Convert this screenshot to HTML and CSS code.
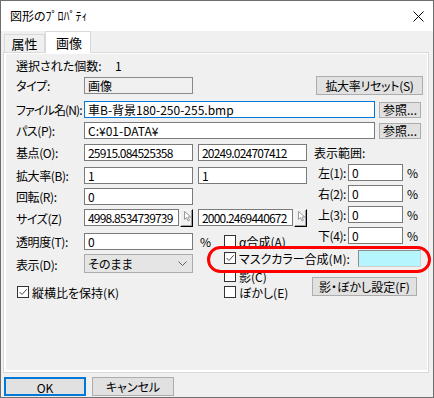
FILE: index.html
```html
<!DOCTYPE html>
<html lang="ja">
  <head>
    <meta charset="UTF-8" />
    <title>図形のﾌﾟﾛﾊﾟﾃｨ</title>
    <link rel="stylesheet" href="styles.css">
  </head>
  <body>
    <div class="dialog">
      <div class="titlebar">
        <span class="title">図形のﾌﾟﾛﾊﾟﾃｨ</span>
        <svg class="close-icon" width="11" height="11" viewBox="0 0 11 11">
          <path d="M0.5 0.5 L10.5 10.5 M10.5 0.5 L0.5 10.5" stroke="#000" stroke-width="1" fill="none" />
        </svg>
      </div>

      <div class="client">
        <div class="tabs">
          <div class="tab">属性</div>
          <div class="tab active">画像</div>
        </div>

        <div class="tab-panel">
          <div class="tab-page">
            <div class="count-row">
              <span class="count-label">選択された個数:</span>
              <span>1</span>
            </div>

            <div class="row type-row">
              <span class="label">タイプ:</span>
              <div class="readonly-box">画像</div>
              <button class="btn reset-btn">拡大率リセット(S)</button>
            </div>

            <div class="row file-row">
              <span class="label narrow">ファイル名(N):</span>
              <input class="textbox path-box focused" type="text" value="車B-背景180-250-255.bmp" />
              <button class="btn browse-btn">参照...</button>
            </div>

            <div class="row path-row">
              <span class="label">パス(P):</span>
              <input class="textbox path-box" type="text" value="C:¥01-DATA¥" />
              <button class="btn browse-btn">参照...</button>
            </div>

            <div class="geom-grid">
              <!-- 基点 -->
              <span class="label r1 c-label">基点(O):</span>
              <input class="textbox num r1 c-first" type="text" value="25915.084525358" />
              <input class="textbox num r1 c-second" type="text" value="20249.024707412" />

              <!-- 拡大率 -->
              <span class="label r2 c-label">拡大率(B):</span>
              <input class="textbox num r2 c-first" type="text" value="1" />
              <input class="textbox num r2 c-second" type="text" value="1" />

              <!-- 回転 -->
              <span class="label r3 c-label">回転(R):</span>
              <input class="textbox num r3 c-first" type="text" value="0" />

              <!-- サイズ -->
              <span class="label r4 c-label">サイズ(Z)</span>
              <div class="size-cell r4 c-first">
                <input class="textbox num size-box" type="text" value="4998.8534739739" />
                <button class="size-btn">
                  <svg width="9" height="12" viewBox="0 0 9 12">
                    <path d="M1.5 1.5 L1.5 9.5 L3.5 7.5 L5 11 L6.5 10.3 L5 7 L7.8 7 Z" fill="#fff" stroke="#9a9a9a" stroke-width="1" />
                  </svg>
                </button>
              </div>
              <div class="size-cell r4 c-second">
                <input class="textbox num size-box" type="text" value="2000.2469440672" />
                <button class="size-btn">
                  <svg width="9" height="12" viewBox="0 0 9 12">
                    <path d="M1.5 1.5 L1.5 9.5 L3.5 7.5 L5 11 L6.5 10.3 L5 7 L7.8 7 Z" fill="#fff" stroke="#9a9a9a" stroke-width="1" />
                  </svg>
                </button>
              </div>

              <!-- 表示範囲 -->
              <div class="range-block">
                <div class="range-title">表示範囲:</div>
                <div class="range-row">
                  <span class="range-label">左(1):</span>
                  <input class="textbox num range-box" type="text" value="0" />
                  <span class="unit">%</span>
                </div>
                <div class="range-row">
                  <span class="range-label">右(2):</span>
                  <input class="textbox num range-box" type="text" value="0" />
                  <span class="unit">%</span>
                </div>
                <div class="range-row">
                  <span class="range-label">上(3):</span>
                  <input class="textbox num range-box" type="text" value="0" />
                  <span class="unit">%</span>
                </div>
                <div class="range-row">
                  <span class="range-label">下(4):</span>
                  <input class="textbox num range-box" type="text" value="0" />
                  <span class="unit">%</span>
                </div>
              </div>

              <!-- 透明度 -->
              <span class="label r5 c-label">透明度(T):</span>
              <input class="textbox num r5 c-first" type="text" value="0" />
              <span class="unit r5 c-unit">%</span>

              <!-- 表示 -->
              <span class="label r6 c-label">表示(D):</span>
              <div class="dropdown r6 c-first">
                <span>そのまま</span>
                <svg width="9" height="6" viewBox="0 0 9 6">
                  <path d="M0.5 0.5 L4.5 4.5 L8.5 0.5" stroke="#606060" stroke-width="1" fill="none" />
                </svg>
              </div>

              <!-- 縦横比 -->
              <div class="check keep-ratio r7">
                <span class="checkbox checked">
                  <svg width="10" height="10" viewBox="0 0 10 10">
                    <path d="M1.5 5 L4 7.5 L8.8 2.2" stroke="#4a4a4a" stroke-width="1" fill="none" />
                  </svg>
                </span>
                <span>縦横比を保持(K)</span>
              </div>

              <!-- 合成 -->
              <div class="blend-group">
                <div class="check blend-row">
                  <span class="checkbox"></span>
                  <span>α合成(A)</span>
                </div>
                <div class="check blend-row mask-row">
                  <span class="checkbox checked">
                    <svg width="10" height="10" viewBox="0 0 10 10">
                      <path d="M1.5 5 L4 7.5 L8.8 2.2" stroke="#4a4a4a" stroke-width="1" fill="none" />
                    </svg>
                  </span>
                  <span>マスクカラー合成(M):</span>
                  <div class="swatch"></div>
                </div>
                <div class="blend-bottom">
                  <div class="blend-list">
                    <div class="check blend-row">
                      <span class="checkbox"></span>
                      <span>影(C)</span>
                    </div>
                    <div class="check blend-row">
                      <span class="checkbox"></span>
                      <span>ぼかし(E)</span>
                    </div>
                  </div>
                  <button class="btn shadow-btn">影・ぼかし設定(F)</button>
                </div>
              </div>
            </div>
          </div>

          <div class="highlight"></div>
        </div>

        <div class="footer">
          <button class="btn footer-btn default">OK</button>
          <button class="btn footer-btn">キャンセル</button>
        </div>
      </div>
    </div>
  </body>
</html>
```

FILE: styles.css
```css
* {
  box-sizing: border-box;
}

body {
  margin: 0;
  font-family: "Noto Sans CJK JP", "Noto Sans", sans-serif;
  font-size: 12px;
  font-feature-settings: "palt";
  color: #000;
  background-color: #f0f0f0;
}

.dialog {
  width: 434px;
  height: 398px;
  border: 1px solid #6e6e6e;
  background-color: #f0f0f0;
  display: flex;
  flex-direction: column;
}

/* Title bar */
.titlebar {
  height: 30px;
  flex-shrink: 0;
  background-color: #fff;
  display: flex;
  align-items: center;
  padding-left: 9px;
  padding-right: 9px;
}

.title {
  flex: 1;
  line-height: 16px;
}

.close-icon {
  display: block;
}

/* Client area */
.client {
  flex: 1;
  display: flex;
  flex-direction: column;
  padding: 1px 4px 0 2px;
}

.tabs {
  display: flex;
  align-items: flex-end;
  height: 20px;
  padding-left: 1px;
  position: relative;
  z-index: 1;
}

.tab {
  height: 18px;
  width: 41px;
  border: 1px solid #d9d9d9;
  border-bottom: none;
  background-color: #f0f0f0;
  display: flex;
  align-items: center;
  justify-content: center;
  font-size: 13px;
  line-height: 16px;
  padding-top: 1px;
}

.tab.active {
  height: 22px;
  width: 46px;
  margin-bottom: -1px;
  background-color: #fff;
  padding-top: 0;
  padding-left: 2px;
}

.tab-panel {
  position: relative;
  height: 321px;
  border: 1px solid #d9d9d9;
  background-color: #fff;
  padding: 1px 1px 2px 2px;
}

.tab-page {
  height: 100%;
  background-color: #f0f0f0;
  padding: 4px 0 0 10px;
}

/* Top rows */
.count-row {
  display: flex;
  height: 16px;
  line-height: 16px;
}

.count-label {
  width: 99px;
}

.row {
  display: flex;
  align-items: center;
}

.label {
  width: 68px;
  flex-shrink: 0;
  line-height: 17px;
  white-space: nowrap;
  letter-spacing: -0.4px;
}

.label.narrow {
  letter-spacing: -0.9px;
}

.type-row {
  height: 19px;
  margin-top: 2px;
}

.file-row {
  height: 17px;
  margin-top: 6px;
}

.path-row {
  height: 17px;
  margin-top: 4px;
}

.readonly-box {
  width: 109px;
  height: 17px;
  border: 1px solid #8a8a8a;
  background-color: #f0f0f0;
  padding-left: 3px;
  line-height: 15px;
}

.textbox {
  height: 17px;
  border: 1px solid #7a7a7a;
  background-color: #fff;
  font-family: inherit;
  font-size: 12px;
  font-feature-settings: "palt";
  color: #000;
  padding: 0 3px;
  margin: 0;
  outline: none;
}

.textbox.focused {
  border-color: #0078d7;
}

.num {
  letter-spacing: -0.8px;
}

.path-box {
  width: 291px;
}

.btn {
  font-family: inherit;
  font-size: 12px;
  font-feature-settings: "palt";
  color: #000;
  background-color: #e1e1e1;
  border: 1px solid #adadad;
  padding: 0;
  margin: 0;
  white-space: nowrap;
}

.reset-btn {
  width: 107px;
  height: 19px;
  margin-left: 123px;
  letter-spacing: -0.3px;
}

.browse-btn {
  width: 42px;
  height: 16px;
  margin-left: 4px;
  line-height: 14px;
}

/* Geometry grid */
.geom-grid {
  margin-top: 5px;
  display: grid;
  grid-template-columns: 68px 114px 24px 92px 108px;
  grid-template-rows: 17px 23px 21px 22px 23px 23px 27px;
  align-items: end;
}

.r1 { grid-row: 1; }
.r2 { grid-row: 2; }
.r3 { grid-row: 3; }
.r4 { grid-row: 4; }
.r5 { grid-row: 5; }
.r6 { grid-row: 6; }
.r7 { grid-row: 7; }

.c-label { grid-column: 1; }
.c-first { grid-column: 2; width: 109px; }
.c-second { grid-column: 3 / 5; width: 109px; }
.c-unit { grid-column: 3; }

.size-cell {
  display: flex;
  height: 18px;
}

.size-box {
  width: 95px;
}

.size-btn {
  width: 13px;
  height: 18px;
  margin-left: 1px;
  padding: 0 0 0 2px;
  background-color: #f0f0f0;
  border: 1px solid;
  border-color: #f8f8f8 #000 #000 #f8f8f8;
  box-shadow: inset -1px -1px 0 #a0a0a0;
  display: flex;
  align-items: flex-start;
  justify-content: center;
}

.unit {
  line-height: 17px;
  padding-left: 2px;
}

.range-block {
  grid-column: 5;
  grid-row: 1 / 5;
  align-self: start;
  display: flex;
  flex-direction: column;
  gap: 4px;
}

.range-title {
  height: 16px;
  line-height: 18px;
}

.range-row {
  display: flex;
  align-items: center;
  height: 17px;
}

.range-label {
  width: 34px;
  text-align: right;
  padding-right: 2px;
  white-space: nowrap;
  letter-spacing: -0.4px;
}

.range-box {
  width: 55px;
}

.range-row .unit {
  padding-left: 4px;
}

.dropdown {
  height: 19px;
  background-color: #e5e5e5;
  border: 1px solid #acacac;
  display: flex;
  align-items: center;
  justify-content: space-between;
  padding: 0 5px 0 3px;
}

/* Checkboxes */
.check {
  display: flex;
  align-items: center;
  gap: 3px;
  height: 16px;
  white-space: nowrap;
}

.checkbox {
  width: 12px;
  height: 12px;
  border: 1px solid #333;
  background-color: #fff;
  display: flex;
  align-items: center;
  justify-content: center;
  flex-shrink: 0;
}

.keep-ratio {
  grid-column: 1 / 4;
  padding-left: 1px;
}

.blend-group {
  grid-column: 4 / 6;
  grid-row: 5 / 8;
  align-self: start;
  padding: 6px 1px 0 2px;
}

.mask-row {
  height: 18px;
}

.swatch {
  width: 63px;
  height: 17px;
  margin-left: auto;
  background-color: #b5f5fd;
  border: 1px solid;
  border-color: #8c8c8c #d0d0d0 #d0d0d0 #8c8c8c;
}

.blend-bottom {
  display: flex;
  margin-top: 1px;
}

.shadow-btn {
  width: 105px;
  height: 19px;
  margin: 9px 4px 0 auto;
}

/* Annotation */
.highlight {
  position: absolute;
  left: 203px;
  top: 193px;
  width: 224px;
  height: 27px;
  border: 3px solid #ff0000;
  border-radius: 14px;
}

/* Footer */
.footer {
  display: flex;
  gap: 6px;
  margin-top: 4px;
  padding-left: 1px;
}

.footer-btn {
  width: 82px;
  height: 19px;
}

.footer-btn.default {
  border: 2px solid #0078d7;
}
```
